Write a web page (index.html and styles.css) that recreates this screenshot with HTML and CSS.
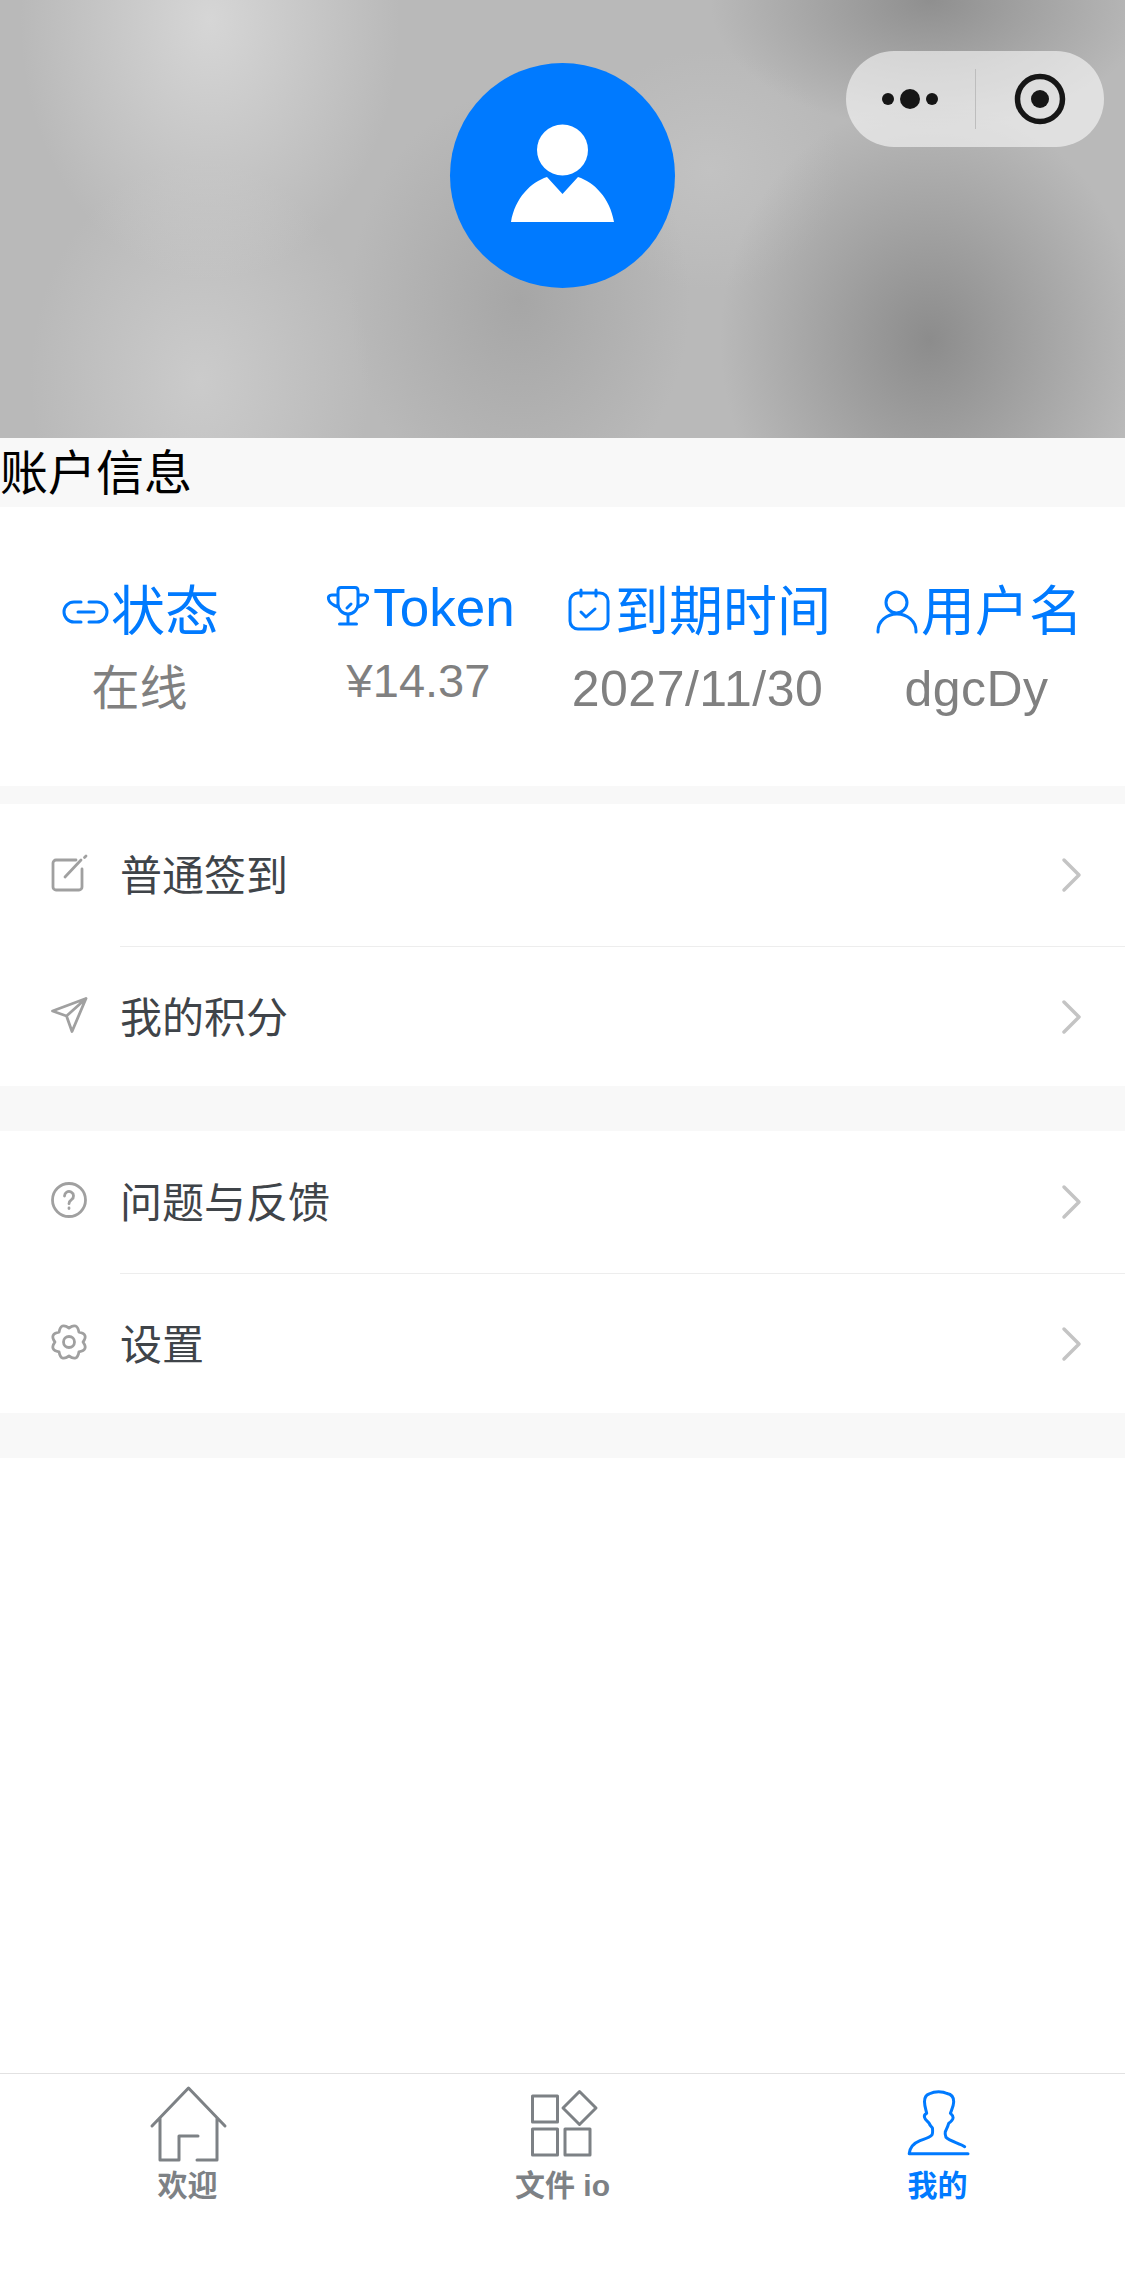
FILE: index.html
```html
<!DOCTYPE html>
<html lang="zh-CN">
<head>
  <meta charset="UTF-8">
  <title>我的</title>
  <link rel="stylesheet" href="styles.css">
</head>
<body>
  <div class="page">
    <div class="content">
      <div class="hero">
        <div class="avatar">
          <svg width="225" height="225" viewBox="0 0 225 225">
            <circle cx="112.5" cy="87" r="25.5" fill="#fff"/>
            <path d="M61 159c4-24 20-40 36-45l15.500 17 15.500-17c16 5 32 21 36 45z" fill="#fff"/>
          </svg>
        </div>
        <div class="capsule">
          <div class="capsule-side">
            <svg width="100" height="40" viewBox="0 0 100 40">
              <circle cx="28" cy="20" r="6" fill="#161616"/>
              <circle cx="50" cy="20" r="10" fill="#161616"/>
              <circle cx="72" cy="20" r="6" fill="#161616"/>
            </svg>
          </div>
          <div class="capsule-line"></div>
          <div class="capsule-side">
            <svg width="56" height="56" viewBox="0 0 56 56">
              <circle cx="28" cy="28" r="22.500" fill="none" stroke="#161616" stroke-width="5.500"/>
              <circle cx="28" cy="28" r="9" fill="#161616"/>
            </svg>
          </div>
        </div>
      </div>

      <div class="section-title">账户信息</div>

      <div class="info">
        <div class="info-item">
          <div class="info-title">
            <svg class="info-icon" viewBox="0 0 48 48">
              <path d="M19 14h-7a10 10 0 0 0 0 20h7M27 14h8a10 10 0 0 1 0 20h-8M16 24h16"/>
            </svg>
            <span>状态</span>
          </div>
          <div class="info-value">在线</div>
        </div>
        <div class="info-item info-item-latin">
          <div class="info-title">
            <svg class="info-icon" viewBox="0 0 48 48">
              <path d="M14 7q0-3.500 3-3.500h14q3 0 3 3.500v13a10 10 0 0 1-20 0zM24 30v9M15.500 40h17M14 11H8c-3 0-4 2-3.500 4 .5 3 4 6 9.500 8M34 11h6c3 0 4 2 3.500 4-.5 3-4 6-9.500 8M23 24l4-4"/>
            </svg>
            <span class="info-title-latin">Token</span>
          </div>
          <div class="info-value">¥14.37</div>
        </div>
        <div class="info-item">
          <div class="info-title">
            <svg class="info-icon" viewBox="0 0 48 48">
              <rect x="4" y="5" width="38" height="36" rx="8"/>
              <path d="M15 2v6M30 2v6M15 24l5 5 9-8"/>
            </svg>
            <span>到期时间</span>
          </div>
          <div class="info-value info-value-latin">2027/11/30</div>
        </div>
        <div class="info-item">
          <div class="info-title">
            <svg class="info-icon" viewBox="0 0 48 48">
              <circle cx="24.500" cy="14.500" r="10.500"/>
              <path d="M6 44v-1a19 17 0 0 1 38 0v1"/>
            </svg>
            <span>用户名</span>
          </div>
          <div class="info-value info-value-latin">dgcDy</div>
        </div>
      </div>

      <div class="gap gap-small"></div>

      <div class="menu">
        <div class="menu-row">
          <svg class="menu-icon" viewBox="0 0 36 36">
            <path d="M25 5H5a3 3 0 0 0-3 3v24a3 3 0 0 0 3 3h23a3 3 0 0 0 3-3V14M14 22 30 5M33.500 2.500 35 1"/>
          </svg>
          <span class="menu-text">普通签到</span>
          <svg class="chevron" viewBox="0 0 24 36"><path d="M6 3l15 15L6 33"/></svg>
        </div>
        <div class="menu-line"></div>
        <div class="menu-row menu-row-last">
          <svg class="menu-icon" viewBox="0 0 36 36">
            <path d="M35 1.500 1.500 14l14 5L21 34.500zM35 1.500 15.500 19"/>
          </svg>
          <span class="menu-text">我的积分</span>
          <svg class="chevron" viewBox="0 0 24 36"><path d="M6 3l15 15L6 33"/></svg>
        </div>
      </div>

      <div class="gap"></div>

      <div class="menu">
        <div class="menu-row">
          <svg class="menu-icon" viewBox="0 0 36 36">
            <circle cx="18" cy="18" r="16.500"/>
            <path d="M13.500 14a4.500 4.500 0 1 1 7 3.700c-1.700 1.200-2.500 2-2.500 4M18 26v.5"/>
          </svg>
          <span class="menu-text">问题与反馈</span>
          <svg class="chevron" viewBox="0 0 24 36"><path d="M6 3l15 15L6 33"/></svg>
        </div>
        <div class="menu-line"></div>
        <div class="menu-row menu-row-last">
          <svg class="menu-icon" viewBox="0 0 36 36">
            <path d="M32 18Q37.900 26.200 27.900 27.900 26.200 37.900 18 32 9.800 37.900 8.100 27.900-1.900 26.200 4 18-1.900 9.800 8.100 8.100 9.800-1.900 18 4 26.200-1.900 27.900 8.100 37.900 9.800 32 18z"/>
            <circle cx="18" cy="18" r="5.500"/>
          </svg>
          <span class="menu-text">设置</span>
          <svg class="chevron" viewBox="0 0 24 36"><path d="M6 3l15 15L6 33"/></svg>
        </div>
      </div>

      <div class="gap"></div>
    </div>

    <div class="tabbar">
      <div class="tab">
        <svg class="tab-icon" viewBox="0 0 80 80">
          <path d="M4 42 40.500 4 77 42M12 34v42h19V52h19M49 76h20V34"/>
        </svg>
        <span class="tab-label">欢迎</span>
      </div>
      <div class="tab">
        <svg class="tab-icon" viewBox="0 0 80 80">
          <rect x="9.500" y="12" width="25" height="26"/>
          <rect x="9.500" y="45" width="25" height="26"/>
          <rect x="42" y="45" width="25" height="26"/>
          <path d="M56.500 7.500 73 24 56.500 40.500 40 24z"/>
        </svg>
        <span class="tab-label">文件 io</span>
      </div>
      <div class="tab tab-active">
        <svg class="tab-icon" viewBox="0 0 80 80">
          <path d="M66.700 62.700C62 59.500 51 57 48 53.300 47 51 47 49 47.300 47.700 48.500 45 50 42 50.700 39.300 53 38 55.500 35 55 33.300 55 31 53 30 52.400 29.300 53.500 26 55.700 22 55.700 17.700 55.700 12 52 10 49 9.500 47 8.300 44 7.700 40.600 7.700 35 7.700 33 9 31 10 28 11 26.500 14 26.500 17.700 26.500 22 28 26 28.700 29.300 27 30 26 31.500 26.500 33.300 27 36 30 37.500 31.200 39.300 32 42 33.500 42.500 34.500 44.300 34.700 47 34.800 49.500 33.900 51 31 54 26 55 22 56.700 17 58.700 12 62 11.200 69.700H70"/>
        </svg>
        <span class="tab-label">我的</span>
      </div>
    </div>
  </div>
</body>
</html>
```

FILE: styles.css
```css
* {
  box-sizing: border-box;
}

body {
  margin: 0;
  background: #fff;
  font-family: "Liberation Sans", "Noto Sans CJK SC", sans-serif;
}

.page {
  display: flex;
  flex-direction: column;
  height: 2270px;
}

.content {
  flex: 1;
}

/* header */
.hero {
  position: relative;
  display: flex;
  justify-content: center;
  height: 438px;
  padding-top: 63px;
  background:
    radial-gradient(ellipse 190px 260px at 210px 20px, #d6d6d6, rgba(214, 214, 214, 0)),
    radial-gradient(ellipse 170px 220px at 200px 380px, #cbcbcb, rgba(203, 203, 203, 0)),
    radial-gradient(ellipse 210px 240px at 930px 340px, #8c8c8c, rgba(140, 140, 140, 0)),
    radial-gradient(ellipse 220px 130px at 930px 0, #8f8f8f, rgba(143, 143, 143, 0)),
    radial-gradient(ellipse 170px 210px at 520px 300px, #a6a6a6, rgba(166, 166, 166, 0)),
    radial-gradient(ellipse 130px 120px at 710px 170px, #c2c2c2, rgba(194, 194, 194, 0)),
    #b9b9b9;
}

.avatar {
  width: 225px;
  height: 225px;
  border-radius: 50%;
  background: #007aff;
}

.avatar svg {
  display: block;
}

.capsule {
  position: absolute;
  top: 51px;
  right: 21px;
  display: flex;
  align-items: center;
  width: 258px;
  height: 96px;
  border-radius: 48px;
  background: rgba(255, 255, 255, 0.56);
}

.capsule-side {
  display: flex;
  flex: 1;
  justify-content: center;
}

.capsule-side svg {
  display: block;
}

.capsule-line {
  width: 1px;
  height: 60px;
  background: #bdbdbd;
}

.section-title {
  height: 69px;
  background: #f8f8f8;
  color: #000;
  font-size: 48px;
  line-height: 71px;
}

/* account info */
.info {
  display: grid;
  grid-template-columns: repeat(4, 1fr);
  height: 279px;
  padding: 69px 9px 0 0;
}

.info-item {
  display: flex;
  flex-direction: column;
  align-items: center;
}

.info-title {
  display: flex;
  align-items: center;
  height: 72px;
  color: #007aff;
  font-size: 54px;
  line-height: 72px;
  white-space: nowrap;
}

.info-title-latin {
  font-size: 53px;
}

.info-icon {
  width: 48px;
  height: 48px;
  margin: 0 1px 0 2px;
  fill: none;
  stroke: #007aff;
  stroke-width: 3;
  stroke-linecap: round;
  stroke-linejoin: round;
}

.info-value {
  margin-top: 6px;
  color: #808080;
  font-size: 48px;
  line-height: 70px;
  white-space: nowrap;
}

.info-value-latin {
  font-size: 50px;
  letter-spacing: 0.5px;
}

.info-item-latin .info-title {
  height: 64px;
}

.info-item-latin .info-value {
  font-size: 47px;
}

.gap {
  height: 45px;
  background: #f8f8f8;
}

.gap-small {
  height: 18px;
}

/* menu lists */
.menu-row {
  display: flex;
  align-items: center;
  height: 142px;
  padding: 0 43px 0 51px;
}

.menu-row-last {
  height: 139px;
}

.menu-icon {
  width: 36px;
  height: 36px;
  margin: 0 33px 4px 0;
  overflow: visible;
  fill: none;
  stroke: #a0a0a0;
  stroke-width: 2.800;
  stroke-linecap: round;
  stroke-linejoin: round;
}

.menu-text {
  flex: 1;
  padding-top: 4px;
  color: #3f4449;
  font-size: 42px;
  line-height: 60px;
}

.chevron {
  width: 24px;
  height: 36px;
  fill: none;
  stroke: #c4c4c4;
  stroke-width: 3.5;
  stroke-linecap: round;
  stroke-linejoin: round;
}

.menu-line {
  height: 1px;
  margin-left: 120px;
  background: #ededed;
}

/* bottom tabs */
.tabbar {
  display: grid;
  grid-template-columns: repeat(3, 1fr);
  height: 197px;
  border-top: 1px solid #e2e2e2;
  padding-top: 10px;
  color: #7d8185;
}

.tab {
  display: flex;
  flex-direction: column;
  align-items: center;
}

.tab-icon {
  width: 80px;
  height: 80px;
  fill: none;
  stroke: #7d8185;
  stroke-width: 3;
  stroke-linecap: round;
  stroke-linejoin: round;
}

.tab-label {
  font-size: 30px;
  font-weight: 700;
  line-height: 44px;
}

.tab-active {
  color: #007aff;
}

.tab-active .tab-icon {
  stroke: #007aff;
}
```
